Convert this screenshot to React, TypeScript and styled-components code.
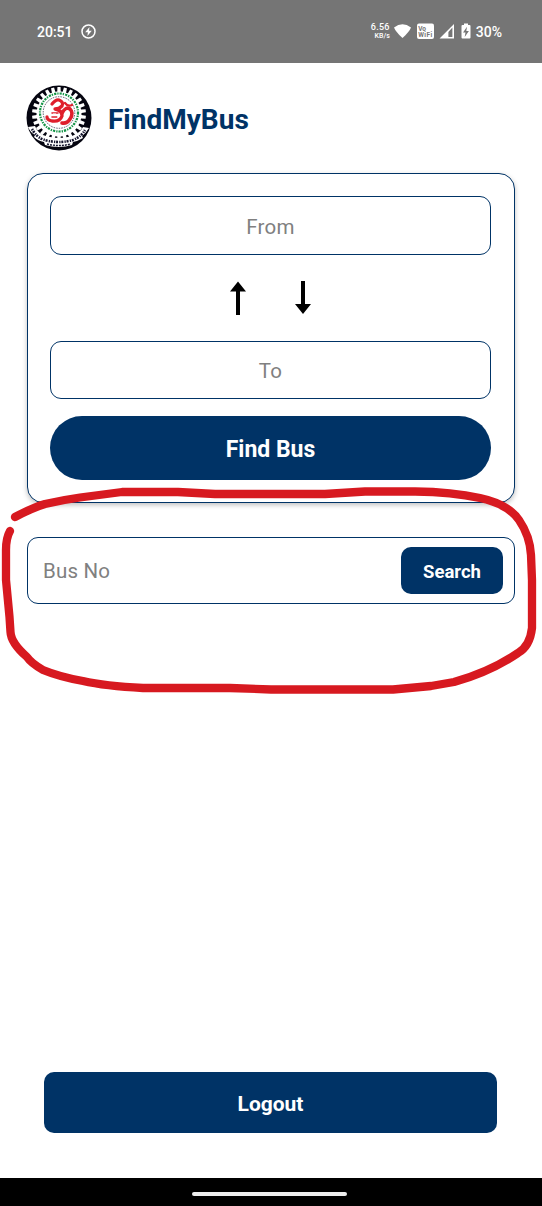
import React from "react";
import styled, { createGlobalStyle } from "styled-components";

const navy = "#003366";

const GlobalStyle = createGlobalStyle`
  * { box-sizing: border-box; }
  body { margin: 0; background: #fff; font-family: Roboto, sans-serif; }
  button, input { font-family: inherit; }
`;

const Screen = styled.div`
  position: relative;
  width: 542px;
  height: 1206px;
  display: flex;
  flex-direction: column;
  background: #fff;
  overflow: hidden;
`;

const StatusBar = styled.header`
  height: 63px;
  flex: none;
  display: flex;
  align-items: center;
  justify-content: space-between;
  padding: 0 40px 0 37px;
  background: #757575;
  color: #fff;
`;

const StatusGroup = styled.div<{ $gap: number }>`
  display: flex;
  align-items: center;
  gap: ${(p) => p.$gap}px;
`;

const StatusText = styled.span`
  font-size: 14px;
  line-height: 18px;
  font-weight: 500;
`;

const NetSpeed = styled.div`
  display: flex;
  flex-direction: column;
  align-items: flex-end;
  font-size: 9px;
  line-height: 9px;
  font-weight: 500;
  letter-spacing: 0.3px;
`;

const NetUnit = styled.span`
  font-size: 7px;
  letter-spacing: 0;
`;

const Brand = styled.div`
  display: flex;
  align-items: center;
  gap: 16px;
  height: 68px;
  margin: 21px 26px 21px;
`;

const BrandName = styled.h1`
  margin: 0;
  padding-top: 3px;
  font-size: 28px;
  line-height: 34px;
  font-weight: 700;
  color: ${navy};
`;

const RouteCard = styled.section`
  display: flex;
  flex-direction: column;
  height: 330px;
  margin: 0 27px;
  padding: 22px 23px 22px 22px;
  border: 1.5px solid ${navy};
  border-radius: 16px;
  background: #fff;
  box-shadow: 0 2px 5px rgba(0, 0, 0, 0.25);
`;

const StopInput = styled.input<{ $height: number }>`
  width: 100%;
  height: ${(p) => p.$height}px;
  flex: none;
  padding: 2px 16px 0;
  border: 1.5px solid ${navy};
  border-radius: 11px;
  background: #fff;
  font-size: 20.5px;
  letter-spacing: 0.2px;
  text-align: center;
  outline: none;
  &::placeholder { color: #808080; opacity: 1; }
`;

const SwapRow = styled.div`
  display: flex;
  flex: none;
  justify-content: center;
  align-items: center;
  gap: 49px;
  height: 86px;
  padding-right: 1px;
`;

const FindButton = styled.button`
  height: 64px;
  flex: none;
  margin-top: 17px;
  padding: 2px 0 0;
  border: 0;
  border-radius: 32px;
  background: ${navy};
  color: #fff;
  font-size: 23px;
  font-weight: 700;
`;

const SearchBox = styled.section`
  display: flex;
  align-items: center;
  height: 67px;
  margin: 34px 27px 0;
  padding: 0 11px 0 15px;
  border: 1.5px solid ${navy};
  border-radius: 11px;
  background: #fff;
`;

const BusInput = styled.input`
  flex: 1;
  min-width: 0;
  height: 48px;
  padding: 0;
  border: 0;
  outline: none;
  background: transparent;
  font-size: 20.5px;
  letter-spacing: 0.2px;
  &::placeholder { color: #808080; opacity: 1; }
`;

const SearchButton = styled.button`
  width: 102px;
  height: 47px;
  padding: 2px 0 0;
  border: 0;
  border-radius: 10px;
  background: ${navy};
  color: #fff;
  font-size: 18.5px;
  font-weight: 700;
`;

const LogoutButton = styled.button`
  height: 61px;
  margin: auto 45px 45px 44px;
  padding: 3px 0 0;
  border: 0;
  border-radius: 10px;
  background: ${navy};
  color: #fff;
  font-size: 21px;
  font-weight: 700;
`;

const NavBar = styled.footer`
  display: flex;
  flex: none;
  align-items: center;
  justify-content: center;
  height: 28px;
  padding: 4px 3px 0 0;
  background: #000;
`;

const HomeHandle = styled.div`
  width: 155px;
  height: 4px;
  border-radius: 2px;
  background: #eee;
`;

const Annotation = styled.svg`
  position: absolute;
  left: 0;
  top: 480px;
  pointer-events: none;
`;

const TEETH = 26;
const gear = Array.from({ length: TEETH }, (_, i) =>
  [
    [-0.32, 22.5],
    [-0.24, 27],
    [0.24, 27],
    [0.32, 22.5],
  ]
    .map(([offset, r]) => {
      const a = ((i + offset) / TEETH) * Math.PI * 2;
      return `${(33 + r * Math.sin(a)).toFixed(2)},${(30 - r * Math.cos(a)).toFixed(2)}`;
    })
    .join(" ")
).join(" ");

const Logo = () => (
  <svg width="66" height="68" viewBox="0 0 66 68">
    <circle cx="33" cy="34" r="32.5" fill="#050510" />
    <polygon points={gear} fill="#fff" />
    <circle cx="33" cy="28.500" r="19" fill="none" stroke="#159447" strokeWidth="2.2" strokeDasharray="2.2 1 1.3 1.1" />
    <circle cx="33" cy="28.500" r="15.8" fill="#fff" stroke="#181832" strokeWidth="0.7" strokeDasharray="1.5 1.1" />
    <g fill="none" stroke="#df1f2c" strokeLinecap="round" strokeLinejoin="round">
      <path d="M26 20q4-5 7-4q5 2 3 6q-3 3-7 3q7 1 7 7q-2 6-10 5q-5-1-5-4" strokeWidth="3.3" />
      <path d="M36 29q4-7 8-4q4 4 0 10q-3 5-8 4" strokeWidth="3.6" />
      <path d="M39 19q3 4 7 2" strokeWidth="2.3" />
      <path d="M26 29l6 0M26 33h5" strokeWidth="1.6" />
    </g>
    <path d="M29 19l2 2M27 30h3M32 32v2" stroke="#fff" strokeWidth="1" />
    <path d="M2 43l7-1q3 8 11 10q13 4 26 0q8-3 11-9l6 1q-3 5-7 8l1 2q-5 3-10 4l-1 3q-13 4-27 0l-1-3q-6-1-10-5l1-2q-5-3-7-8z" fill="#fff" />
    <path d="M6 45q5 9 13 11q14 4 28 0q8-3 12-10" fill="none" stroke="#15152e" strokeWidth="2.6" strokeDasharray="1.3 0.8 2 1.2" />
    <path d="M21 60q12 3 24 0" fill="none" stroke="#15152e" strokeWidth="1.5" strokeDasharray="2 1" />
  </svg>
);

const ChargeIcon = () => (
  <svg width="15" height="16" viewBox="0 0 15 16">
    <circle cx="7.5" cy="7.500" r="6.5" fill="none" stroke="#fff" strokeWidth="1.5" />
    <path d="M8.5 3L4.2 8.300h2.7l-.5 3.7 4.4-5.3H8z" fill="#fff" />
  </svg>
);

const StatusIcons = () => (
  <svg width="78" height="18" viewBox="0 0 78 18" fill="#fff">
    <path d="M0 4.400Q8.5-2 17 4.400Q15.5 8.500 8.5 15Q1.5 8.500 0 4.400z" />
    <rect x="23" y="0.500" width="17" height="15.5" rx="2" />
    <text x="24.2" y="7.500" fill="#757575" fontSize="6.5" fontWeight="700" fontFamily="Roboto, sans-serif">Vo</text>
    <text x="24.2" y="14" fill="#757575" fontSize="6.5" fontWeight="700" fontFamily="Roboto, sans-serif" textLength="14">WiFi</text>
    <path fillRule="evenodd" d="M45.500 15.500L60 1v14.500zM54.400 14h4V4.500l-4 4.500z" />
    <path fillRule="evenodd" d="M70 0.500h4v1.5h1.5q1 0 1 1V14.500q0 1-1 1h-7q-1 0-1-1V3q0-1 1-1h1.5zM73 3.800L69 9.500h2.5l-.8 4.5 4.2-6h-2.6z" />
  </svg>
);

const Arrow = ({ down = false }: { down?: boolean }) => (
  <svg width="16" height="34" viewBox="0 0 16 34">
    <path d={down ? "M6 0h4v23h6L8 33 0 23h6z" : "M6 34h4V10.5h6L8 0.5 0 10.5h6z"} fill="#000" />
  </svg>
);

export default function App() {
  return (
    <Screen>
      <GlobalStyle />
      <StatusBar>
        <StatusGroup $gap={8}>
          <StatusText>20:51</StatusText>
          <ChargeIcon />
        </StatusGroup>
        <StatusGroup $gap={4}>
          <NetSpeed>
            6.56
            <NetUnit>KB/s</NetUnit>
          </NetSpeed>
          <StatusIcons />
          <StatusText>30%</StatusText>
        </StatusGroup>
      </StatusBar>
      <Brand>
        <Logo />
        <BrandName>FindMyBus</BrandName>
      </Brand>
      <RouteCard>
        <StopInput $height={59} placeholder="From" />
        <SwapRow>
          <Arrow />
          <Arrow down />
        </SwapRow>
        <StopInput $height={58} placeholder="To" />
        <FindButton>Find Bus</FindButton>
      </RouteCard>
      <SearchBox>
        <BusInput placeholder="Bus No" />
        <SearchButton>Search</SearchButton>
      </SearchBox>
      <LogoutButton>Logout</LogoutButton>
      <NavBar>
        <HomeHandle />
      </NavBar>
      <Annotation width="542" height="220" viewBox="0 480 542 220">
        <path
          d="M15 517Q32 508 45 504Q62 500 80 497.500L122 492H178L215 494H325L365 491.500H415Q452 492 480 498Q508 504 519 520Q530 536 531 555L532 580V628Q530 646 518 653Q490 672 454 682L431 686L393 689.500H271L230 688H143Q105 686 83 681Q60 677 43 670Q31 663 27 657Q11 643 10.500 632L9.500 617L6 580V550Q6 538 10 531"
          fill="none"
          stroke="#d71920"
          strokeWidth="8.300"
          strokeLinecap="round"
          strokeLinejoin="round"
        />
      </Annotation>
    </Screen>
  );
}
